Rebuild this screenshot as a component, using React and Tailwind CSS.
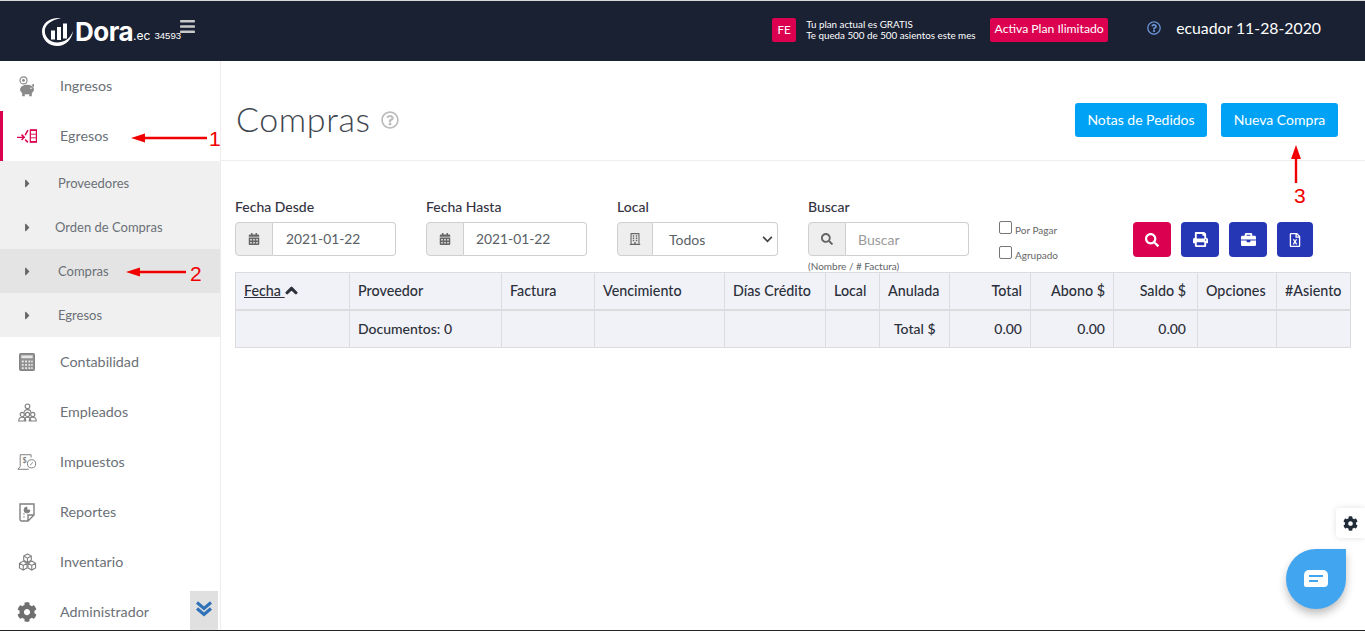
import React from "react";
import { FaBars, FaBriefcase, FaCalendarAlt, FaCaretRight, FaChevronUp, FaCog, FaRegFileExcel, FaPrint, FaRegBuilding, FaSearch, FaRegQuestionCircle } from "react-icons/fa";

// iconos del menu lateral
const PiggyIcon = () => (
  <svg viewBox="0 0 20 24" className="w-[18px] h-[21px]" fill="#8a8a8a">
    <circle cx="6" cy="5" r="4" fill="none" stroke="#8a8a8a" strokeWidth="1.3" />
    <circle cx="6" cy="5" r="1.6" />
    <ellipse cx="10" cy="15.5" rx="8" ry="5.5" />
    <path d="M15 10l3-1v4zM4.5 19h3v4h-3zM12.5 19h3v4h-3z" />
    <circle cx="14.500" cy="14" r="0.900" fill="#fff" />
  </svg>
);

const EgresoIcon = () => (
  <svg viewBox="0 0 22 16" className="w-[22px] h-[16px]" fill="none" stroke="#dc0050" strokeWidth="1.6">
    <path d="M0 9.500h8M5 6.500l3 3-3 3M9 7l3-5.500M9 12l3 3" />
    <rect x="14" y="0.500" width="8" height="15" fill="#dc0050" stroke="none" />
    <rect x="15.300" y="2.500" width="5.400" height="3" fill="#fff" stroke="none" />
    <rect x="15.300" y="6.500" width="5.400" height="3" fill="#fff" stroke="none" />
    <rect x="15.300" y="10.500" width="5.400" height="3" fill="#fff" stroke="none" />
  </svg>
);

const CalcIcon = () => (
  <svg viewBox="0 0 17 19" className="w-[16px] h-[18px]">
    <rect x="0.5" y="0.5" width="16" height="18" rx="1" fill="#909090" stroke="#7d7d7d" />
    <rect x="2.5" y="2.5" width="12" height="3" fill="#e6e6e6" />
    <path d="M3 8h2v2H3zM6.5 8h2v2h-2zM10 8h2v2h-2zM13 8h1.5v2H13zM3 11.500h2v2H3zM6.500 11.500h2v2h-2zM10 11.500h2v2h-2zM13 11.500h1.500v2H13zM3 15h2v2H3zM6.500 15h2v2h-2zM10 15h2v2h-2zM13 15h1.500v2H13z" fill="#e8e8e8" />
  </svg>
);

const PeopleIcon = () => (
  <svg viewBox="0 0 20 20" className="w-[19px] h-[19px]" fill="none" stroke="#808080" strokeWidth="1.2">
    <circle cx="10" cy="3.500" r="2.500" />
    <path d="M6.500 10c0-2 1.500-3 3.500-3s3.500 1 3.500 3" />
    <circle cx="4.500" cy="12" r="2.200" />
    <circle cx="10" cy="12" r="2.200" />
    <circle cx="15.500" cy="12" r="2.200" />
    <path d="M0.800 19c0-2.500 1.500-4 3.700-4s3.700 1.500 3.700 4zM6.500 19c0-2.500 1.500-4 3.500-4s3.500 1.500 3.500 4M11.800 19c0-2.500 1.500-4 3.700-4s3.700 1.500 3.700 4z" />
  </svg>
);

const TaxIcon = () => (
  <svg viewBox="0 0 22 18" className="w-[21px] h-[18px]" fill="none" stroke="#808080" strokeWidth="1.1">
    <path d="M3.500 14V1h12v3M3.500 14L1 17h12" />
    <circle cx="16" cy="11" r="4.500" />
    <text x="6" y="10" fontSize="8" fontWeight="700" fill="#808080" stroke="none" fontFamily="Lato">$</text>
    <path d="M14.500 12.500l3-3" />
  </svg>
);

const ReportIcon = () => (
  <svg viewBox="0 0 16 19" className="w-[16px] h-[19px]" fill="none" stroke="#808080" strokeWidth="1.4">
    <path d="M1 1h14v11l-6 6H2.500A1.500 1.500 0 0 1 1 16.500zM15 12H9v6" />
    <path d="M8 4a3 3 0 1 0 3 3H8zM4 11h2M4 14h2" fill="#808080" stroke="#808080" strokeWidth="0.8" />
  </svg>
);

const BoxesIcon = () => (
  <svg viewBox="0 0 20 19" className="w-[19px] h-[18px]" fill="none" stroke="#808080" strokeWidth="1.200">
    <path d="M10 1l4 2.200v4.500l-4 2.300-4-2.300V3.200zM6 3.200l4 2.300 4-2.300M10 5.500V10" />
    <path d="M5.500 8.500l4 2.300v5l-4 2.200-4-2.200v-5zM1.500 10.800l4 2.300 4-2.300M5.500 13.100V18" />
    <path d="M14.500 8.500l4 2.300v5l-4 2.200-4-2.200v-5zM10.500 10.800l4 2.300 4-2.300M14.500 13.100V18" />
  </svg>
);

const Logo = () => (
  <svg viewBox="0 0 33 29" className="w-[33px] h-[29px]" fill="#fff">
    <path d="M20 1C9 0 1 6 1 14.500 1 23 8 29 16.500 29 25 29 31 22 32 14 29 22 23 25.500 16 25.500 9 25.500 3.800 20 3.800 14 3.800 8 10 3 20 1z" />
    <rect x="10" y="13.500" width="4" height="9" />
    <rect x="16" y="10" width="4" height="13" />
    <rect x="22" y="6.500" width="4" height="15" />
  </svg>
);

// flechas rojas de la captura
const ArrowLeft = ({ className, w }) => (
  <svg viewBox={`0 0 ${w} 10`} width={w} height="10" className={className}>
    <path d={`M${w} 3.800H12V6.200H${w}z`} fill="#f00000" />
    <path d="M0 5l14-4.500v9z" fill="#f00000" />
  </svg>
);

const menu = [
  { label: "Ingresos", icon: <PiggyIcon /> },
  { label: "Egresos", icon: <EgresoIcon />, active: true },
];
const submenu = [
  { label: "Proveedores", pad: "pl-[24px]" },
  { label: "Orden de Compras", pad: "pl-[21px]" },
  { label: "Compras", pad: "pl-[24px]", active: true },
  { label: "Egresos", pad: "pl-[24px]" },
];
const menu2 = [
  { label: "Contabilidad", icon: <CalcIcon /> },
  { label: "Empleados", icon: <PeopleIcon /> },
  { label: "Impuestos", icon: <TaxIcon /> },
  { label: "Reportes", icon: <ReportIcon /> },
  { label: "Inventario", icon: <BoxesIcon /> },
  { label: "Administrador", icon: <FaCog className="text-[22px] text-[#6f6f6f]" /> },
];

const cols = [
  { w: "w-[114px]", label: "Fecha" },
  { w: "w-[152px]", label: "Proveedor", foot: "Documentos: 0" },
  { w: "w-[93px]", label: "Factura" },
  { w: "w-[130px]", label: "Vencimiento" },
  { w: "w-[101px]", label: "Días Crédito" },
  { w: "w-[54px]", label: "Local" },
  { w: "w-[70px]", label: "Anulada", foot: "Total $", footPad: "pl-[14px]" },
  { w: "w-[81px]", label: "Total", foot: "0.00", right: "text-right pr-[8px]" },
  { w: "w-[83px]", label: "Abono $", foot: "0.00", right: "text-right pr-[8px]" },
  { w: "w-[84px]", label: "Saldo $", foot: "0.00", right: "text-right pr-[11px]" },
  { w: "w-[79px]", label: "Opciones" },
  { w: "w-[74px]", label: "#Asiento" },
];

function MenuItem({ item }) {
  return (
    <div className={`relative h-[50px] shrink-0 flex items-center text-[14.300px] text-[#6b7177] ${item.active ? "border-l-[3px] border-[#dc0050]" : ""}`}>
      <span className={`flex justify-center w-[20px] ${item.active ? "ml-[14px]" : "ml-[17px]"}`}>{item.icon}</span>
      <span className="ml-[23px] mt-[-1px]">{item.label}</span>
    </div>
  );
}

function Field({ label, icon, addon = "w-[38px]", children, hint }) {
  return (
    <div className="w-[161px] relative">
      <label className="block text-[14px] leading-[17px] font-medium text-[#33333f] mb-[7px] mt-[-3px]">{label}</label>
      <div className="flex h-[34px] text-[14px] text-[#5a5f66]">
        <span className={`${addon} shrink-0 flex items-center justify-center bg-[#eeeeee] border border-[#cfcfcf] rounded-l-[4px] text-[#666] text-[12px]`}>{icon}</span>
        {children}
      </div>
      {hint && <div className="text-[10px] leading-[12px] text-[#5f6468] mt-[4px]">{hint}</div>}
    </div>
  );
}

export default function App() {
  return (
    <div className="w-[1365px] h-[631px] overflow-hidden bg-white flex flex-col border-b border-[#222] font-['Lato',sans-serif]">
      {/* Cabecera */}
      <header className="h-[61px] shrink-0 bg-[#1a2133] border-t border-[#d8d8d8] flex items-center text-white">
        <div className="w-[221px] shrink-0 relative flex items-center pl-[41px] pb-[1px] mt-[2px]">
          <Logo />
          <span className="ml-[1px] text-[26px] font-bold leading-none font-['Inter',sans-serif] tracking-[-0.5px]">Dora</span>
          <span className="text-[12px] mt-[9px] font-['Inter',sans-serif]">.ec</span>
          <span className="text-[9.600px] ml-[4px] mt-[9px] font-['Liberation_Sans',sans-serif]">34593</span>
          <FaBars className="absolute left-[179px] top-[1px] text-[17px] text-[#c9c9c9]" />
        </div>
        <div className="ml-auto flex items-center pb-[3px]">
          <span className="w-[24px] h-[24px] rounded-[2px] bg-[#dc0050] flex items-center justify-center text-[11.500px]">FE</span>
          <div className="ml-[10px] text-[9.800px] leading-[11px] w-[169px] whitespace-nowrap">
            <div>Tu plan actual es GRATIS</div>
            <div>Te queda 500 de 500 asientos este mes</div>
          </div>
          <span className="ml-[15px] w-[118px] h-[24px] rounded-[2px] bg-[#dc0050] flex items-center justify-center text-[12.200px]">Activa Plan Ilimitado</span>
          <FaRegQuestionCircle className="ml-[39px] mb-[3px] text-[14px] text-[#6a93d6]" />
          <span className="ml-[15px] mr-[44px] mb-[3px] text-[15.800px]">ecuador 11-28-2020</span>
        </div>
      </header>

      <div className="flex-1 flex min-h-0">
        {/* Menu lateral */}
        <aside className="relative w-[221px] shrink-0 border-r border-[#f0ebee] overflow-hidden flex flex-col">
          {menu.map((m) => <MenuItem key={m.label} item={m} />)}
          <div className="shrink-0 bg-[#f0f0f0]">
            {submenu.map((s) => (
              <div key={s.label} className={`h-[44px] flex items-center text-[13px] text-[#6b7177] pl-[21px] ${s.active ? "bg-[#e4e4e4]" : ""}`}>
                <FaCaretRight className="text-[13px] text-[#666] shrink-0" />
                <span className={`${s.pad} mt-[1px]`}>{s.label}</span>
              </div>
            ))}
          </div>
          {menu2.map((m) => <MenuItem key={m.label} item={m} />)}
          <span className="absolute left-[190px] bottom-0 w-[28px] h-[39px] bg-[#e0e0e0] flex justify-center pt-[10px]">
            <svg viewBox="0 0 18 16" className="w-[18px] h-[16px]" fill="none" stroke="#2f72b8" strokeWidth="3">
              <path d="M2 1.500l7 6 7-6M2 7.500l7 6 7-6" />
            </svg>
          </span>
          <ArrowLeft w={76} className="absolute left-[131px] top-[72px]" />
          <span className="absolute left-[209px] top-[66px] text-[21px] leading-[24px] text-[#f00000] font-['Liberation_Sans',sans-serif]">1</span>
          <ArrowLeft w={60} className="absolute left-[126px] top-[206px]" />
          <span className="absolute left-[190px] top-[201px] text-[21px] leading-[24px] text-[#f00000] font-['Liberation_Sans',sans-serif]">2</span>
        </aside>

        {/* Contenido */}
        <main className="relative flex-1 min-w-0 flex flex-col">
          <div className="h-[100px] shrink-0 border-b border-[#eeeeee] flex items-center pl-[15px] pr-[27px] pt-[18px]">
            <h1 className="text-[34px] font-light tracking-[0.6px] text-[#3f4650] leading-none mb-[2px]">Compras</h1>
            <FaRegQuestionCircle className="ml-[10px] mt-[1px] text-[18px] text-[#bdbdbd]" />
            <div className="ml-auto flex gap-[14px]">
              <button className="h-[34px] w-[132px] rounded-[3px] bg-[#00a2f5] text-white text-[14px]">Notas de Pedidos</button>
              <button className="h-[34px] w-[117px] rounded-[3px] bg-[#00a2f5] text-white text-[14px]">Nueva Compra</button>
            </div>
          </div>

          {/* Filtros */}
          <div className="h-[111px] shrink-0 pl-[14px] pt-[40px] flex gap-[30px]">
            <Field label="Fecha Desde" icon={<FaCalendarAlt />}>
              <span className="flex-1 flex items-center pl-[13px] border border-l-0 border-[#cfcfcf] rounded-r-[4px] text-[13.800px]">2021-01-22</span>
            </Field>
            <Field label="Fecha Hasta" icon={<FaCalendarAlt />}>
              <span className="flex-1 flex items-center pl-[12px] border border-l-0 border-[#cfcfcf] rounded-r-[4px] text-[13.800px]">2021-01-22</span>
            </Field>
            <Field label="Local" addon="w-[36px]" icon={<FaRegBuilding />}>
              <span className="flex-1 flex items-center justify-between pl-[16px] pr-[4px] border border-l-0 border-[#cfcfcf] rounded-r-[4px]">
                Todos
                <svg viewBox="0 0 12 8" className="w-[11px] h-[7px]" fill="none" stroke="#444" strokeWidth="2"><path d="M1 1l5 5 5-5" /></svg>
              </span>
            </Field>
            <Field label="Buscar" icon={<FaSearch />} hint="(Nombre / # Factura)">
              <span className="flex-1 flex items-center pl-[12px] border border-l-0 border-[#cfcfcf] rounded-r-[4px] text-[#9a9a9a]">Buscar</span>
            </Field>
            <div className="mt-[20px] flex flex-col gap-[11px] text-[10px] text-[#666]">
              <label className="flex items-start gap-[3px] h-[14px]"><span className="w-[13px] h-[13px] rounded-[2px] border border-[#767676] bg-white" /><span className="mt-[2px]">Por Pagar</span></label>
              <label className="flex items-start gap-[3px] h-[14px]"><span className="w-[13px] h-[13px] rounded-[2px] border border-[#767676] bg-white" /><span className="mt-[2px]">Agrupado</span></label>
            </div>
            <div className="ml-[45px] mt-[21px] flex gap-[10px] h-[35px] text-white">
              <span className="w-[38px] rounded-[4px] bg-[#dc0050] flex items-center justify-center text-[14px]"><FaSearch /></span>
              <span className="w-[38px] rounded-[4px] bg-[#2637b5] flex items-center justify-center text-[15px]"><FaPrint /></span>
              <span className="w-[38px] rounded-[4px] bg-[#2637b5] flex items-center justify-center text-[15px]"><FaBriefcase /></span>
              <span className="w-[36px] rounded-[4px] bg-[#2637b5] flex items-center justify-center text-[14px]"><FaRegFileExcel /></span>
            </div>
          </div>

          {/* Tabla */}
          <div className="pl-[14px]">
            <table className="table-fixed w-[1115px] border-collapse text-[14.300px] text-[#2b2f3a] bg-[#f1f2f7]">
              <thead>
                <tr className="h-[37px]">
                  {cols.map((c) => (
                    <th key={c.label} className={`${c.w} border border-[#dcdcdf] border-b-2 font-medium px-[8px] ${c.right || "text-left"}`}>
                      {c.label === "Fecha" ? (
                        <span className="flex items-center"><span className="underline">Fecha&nbsp;</span><FaChevronUp className="text-[13px] stroke-[40px]" /></span>
                      ) : c.label}
                    </th>
                  ))}
                </tr>
              </thead>
              <tbody>
                <tr className="h-[38px] text-[14px]">
                  {cols.map((c) => (
                    <td key={c.label} className={`border border-[#dcdcdf] font-medium px-[8px] ${c.right || "text-left"} ${c.footPad || ""}`}>{c.foot}</td>
                  ))}
                </tr>
              </tbody>
            </table>
          </div>

          {/* Anotacion 3 */}
          <svg viewBox="0 0 10 38" width="10" height="38" className="absolute left-[1070px] top-[84px]">
            <path d="M5 0l5 14H6.200v24H3.800V14H0z" fill="#f00000" />
          </svg>
          <span className="absolute left-[1073px] top-[123px] text-[21px] leading-[24px] text-[#f00000] font-['Liberation_Sans',sans-serif]">3</span>

          {/* Flotantes */}
          <span className="absolute right-0 top-[447px] w-[29px] h-[30px] bg-white rounded-l-[4px] shadow-[0_0_6px_rgba(0,0,0,0.12)] flex items-center justify-center text-[#222b38] text-[15px]"><FaCog /></span>
          <span className="absolute left-[1065px] top-[488px] w-[60px] h-[60px] rounded-full rounded-tr-[6px] bg-[#42a5f0] shadow-[0_5px_8px_rgba(0,0,0,0.25)] flex items-center justify-center">
            <svg viewBox="0 0 24 18" className="w-[24px] h-[18px]">
              <path d="M5 0h14a5 5 0 0 1 5 5v8a4 4 0 0 1-4 4H2a2 2 0 0 1-2-2V5a5 5 0 0 1 5-5z" fill="#fff" />
              <path d="M5 6h14M5 11h9" stroke="#42a5f0" strokeWidth="1.800" />
            </svg>
          </span>
        </main>
      </div>
    </div>
  );
}
